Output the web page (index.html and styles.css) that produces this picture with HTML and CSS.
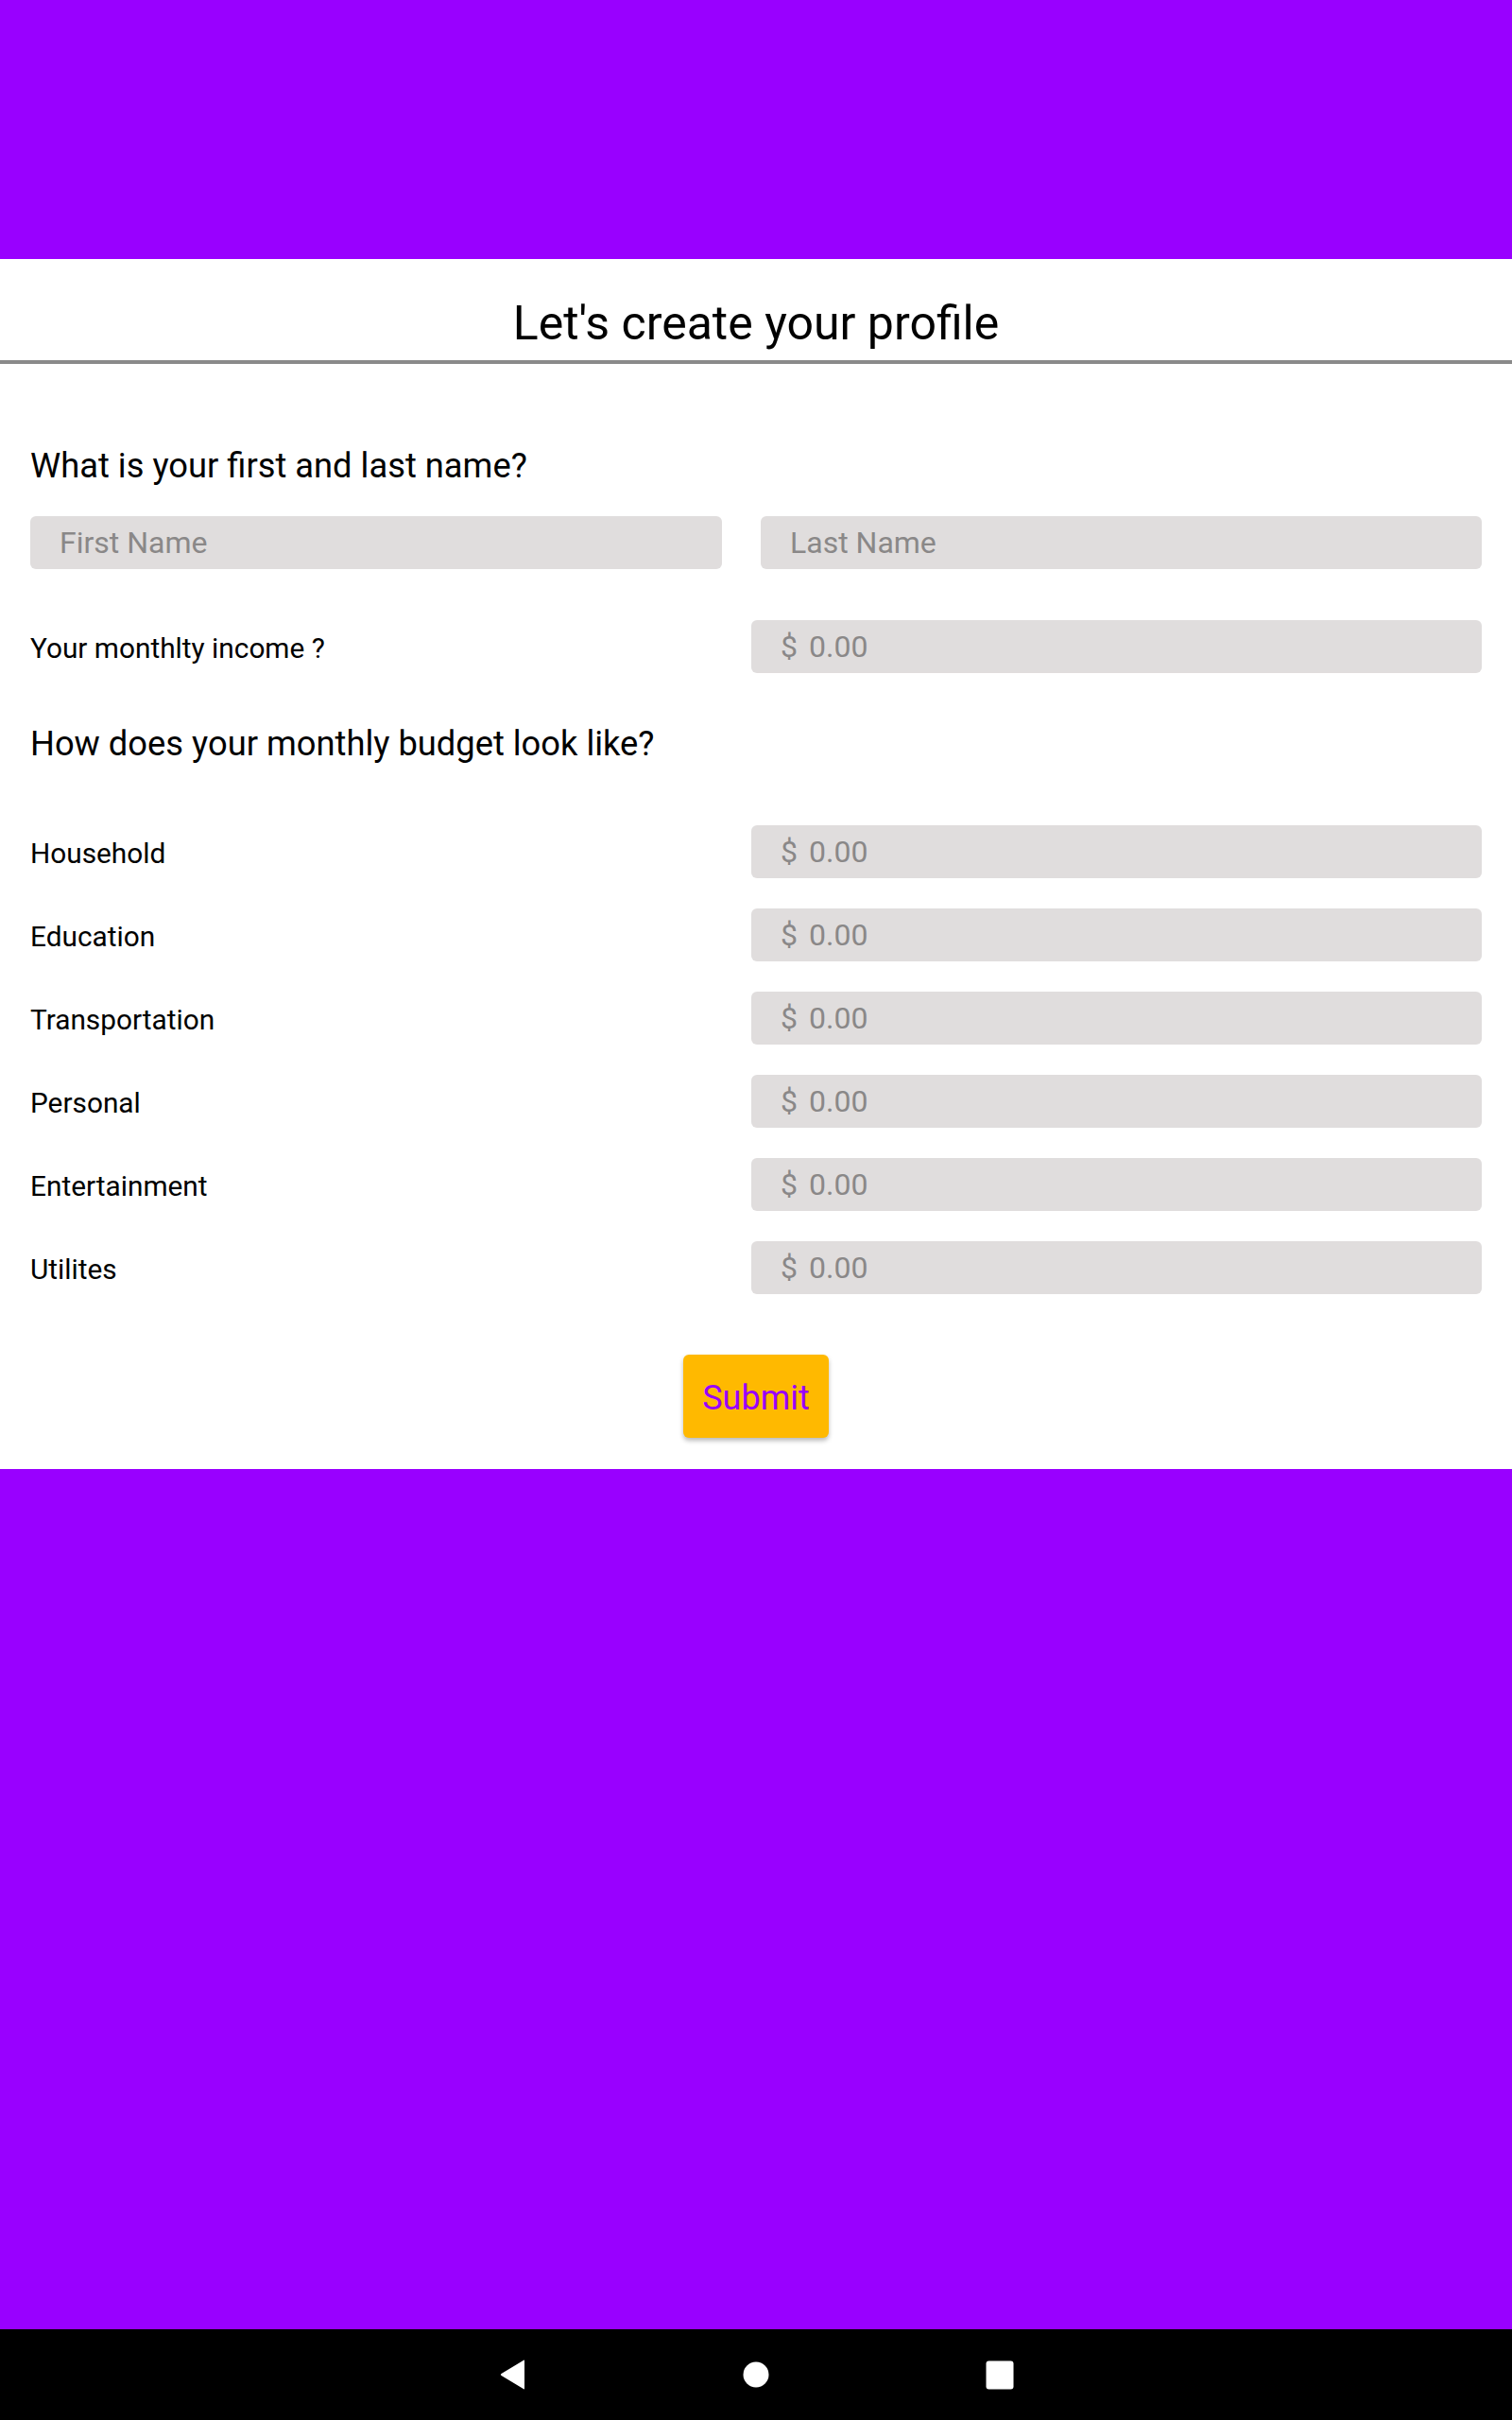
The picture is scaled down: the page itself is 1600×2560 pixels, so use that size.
FILE: index.html
```html
<!DOCTYPE html>
<html lang="en">
<head>
<meta charset="utf-8">
<title>Create your profile</title>
<link rel="stylesheet" href="styles.css">
</head>
<body>
<div class="app">
  <div class="topbar"></div>
  <main class="card">
    <h1 class="title">Let's create your profile</h1>
    <div class="form">
      <h2 class="question q-name">What is your first and last name?</h2>
      <div class="name-row">
        <div class="field"><input class="input" type="text" placeholder="First Name"></div>
        <div class="field"><input class="input" type="text" placeholder="Last Name"></div>
      </div>
      <div class="row row-income">
        <label class="label">Your monthlty income ?</label>
        <div class="field money"><span class="prefix">$</span><input class="input" type="text" placeholder="0.00"></div>
      </div>
      <h2 class="question q-budget">How does your monthly budget look like?</h2>
      <div class="budget">
        <div class="row">
          <label class="label">Household</label>
          <div class="field money"><span class="prefix">$</span><input class="input" type="text" placeholder="0.00"></div>
        </div>
        <div class="row">
          <label class="label">Education</label>
          <div class="field money"><span class="prefix">$</span><input class="input" type="text" placeholder="0.00"></div>
        </div>
        <div class="row">
          <label class="label">Transportation</label>
          <div class="field money"><span class="prefix">$</span><input class="input" type="text" placeholder="0.00"></div>
        </div>
        <div class="row">
          <label class="label">Personal</label>
          <div class="field money"><span class="prefix">$</span><input class="input" type="text" placeholder="0.00"></div>
        </div>
        <div class="row">
          <label class="label">Entertainment</label>
          <div class="field money"><span class="prefix">$</span><input class="input" type="text" placeholder="0.00"></div>
        </div>
        <div class="row">
          <label class="label">Utilites</label>
          <div class="field money"><span class="prefix">$</span><input class="input" type="text" placeholder="0.00"></div>
        </div>
      </div>
      <div class="actions">
        <button class="submit" type="button">Submit</button>
      </div>
    </div>
  </main>
  <div class="filler"></div>
  <nav class="navbar">
    <span class="nav-item">
      <svg width="30" height="34" viewBox="0 0 30 34"><path d="M27 2.5 L27 31.5 Q27 33 25.8 32 L2.5 18 Q1 17 2.5 16 L25.8 2 Q27 1 27 2.5 Z" fill="#fff"/></svg>
    </span>
    <span class="nav-item">
      <svg width="28" height="28" viewBox="0 0 28 28"><circle cx="14" cy="14" r="13.5" fill="#fff"/></svg>
    </span>
    <span class="nav-item">
      <svg width="30" height="31" viewBox="0 0 30 31"><rect x="0.5" y="0.5" width="29" height="30" rx="3" fill="#fff"/></svg>
    </span>
  </nav>
</div>
</body>
</html>
```
FILE: styles.css
```css
* {
  box-sizing: border-box;
}

html, body {
  margin: 0;
  padding: 0;
}

body {
  font-family: Roboto, "Liberation Sans", sans-serif;
  background: #9900ff;
  color: #000;
}

.app {
  display: flex;
  flex-direction: column;
  min-height: 2560px;
}

.topbar {
  height: 274px;
  background: #9900ff;
}

.card {
  background: #fff;
  padding-bottom: 33px;
}

.title {
  margin: 0;
  padding-top: 38px;
  padding-bottom: 9px;
  font-size: 50px;
  line-height: 60px;
  font-weight: 400;
  text-align: center;
  border-bottom: 4px solid #8a8a8a;
}

.form {
  padding: 0 32px;
}

.question {
  margin: 0;
  font-size: 36.3px;
  line-height: 42px;
  font-weight: 400;
}

.q-name {
  margin-top: 87px;
}

.name-row {
  margin-top: 32px;
  display: grid;
  grid-template-columns: 732px 1fr;
  column-gap: 41px;
}

.field {
  height: 56px;
  background: #e0dddd;
  border-radius: 6px;
  display: flex;
  align-items: center;
  padding-left: 31px;
}

.money {
  padding-left: 31px;
}

.prefix {
  font-size: 32px;
  color: #8a8888;
  margin-right: 12px;
}

.input {
  flex: 1;
  min-width: 0;
  border: 0;
  outline: 0;
  background: transparent;
  font-family: Roboto, "Liberation Sans", sans-serif;
  font-size: 32px;
  color: #333;
  padding: 0;
}

.input::placeholder {
  color: #8a8888;
  opacity: 1;
}

.row {
  display: grid;
  grid-template-columns: 1fr 773px;
  align-items: center;
}

.row-income {
  margin-top: 54px;
}

.label {
  font-size: 29.8px;
  line-height: 34px;
  padding-top: 3px;
}

.q-budget {
  margin-top: 54px;
}

.budget {
  margin-top: 65px;
  display: flex;
  flex-direction: column;
  gap: 32px;
}

.actions {
  margin-top: 64px;
  display: flex;
  justify-content: center;
}

.submit {
  width: 154px;
  height: 88px;
  border: 0;
  border-radius: 6px;
  background: #ffb900;
  color: #9900ff;
  font-family: Roboto, "Liberation Sans", sans-serif;
  font-size: 36px;
  padding: 3px 0 0;
  box-shadow: 0 3px 5px rgba(0, 0, 0, 0.28);
}

.filler {
  flex: 1;
  background: #9900ff;
}

.navbar {
  height: 96px;
  background: #000;
  display: grid;
  grid-template-columns: 258px 257px 258px;
  justify-content: center;
  align-items: center;
}

.nav-item {
  display: flex;
  justify-content: center;
  align-items: center;
  height: 96px;
}

.nav-item svg {
  display: block;
}
```
